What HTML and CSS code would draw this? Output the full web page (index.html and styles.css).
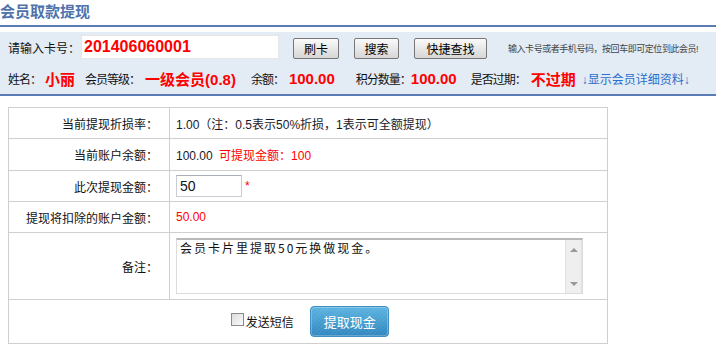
FILE: index.html
```html
<!DOCTYPE html>
<html lang="zh-CN">
<head>
<meta charset="utf-8">
<title>会员取款提现</title>
<link rel="stylesheet" href="styles.css">
</head>
<body>
<div class="title">会员取款提现</div>
<div class="panel">
  <div class="row1">
    <span class="lbl">请输入卡号：</span>
    <input class="card" type="text" value="201406060001">
    <button class="btn b1">刷卡</button>
    <button class="btn b2">搜索</button>
    <button class="btn b3">快捷查找</button>
    <span class="hint">输入卡号或者手机号码，按回车即可定位到此会员!</span>
  </div>
  <div class="row2">
    <span class="lbl">姓名：</span><span class="val v1">小丽</span>
    <span class="lbl l2">会员等级：</span><span class="val v2">一级会员(0.8)</span>
    <span class="lbl l3">余额：</span><span class="val v3">100.00</span>
    <span class="lbl l4">积分数量：</span><span class="val v4">100.00</span>
    <span class="lbl l5">是否过期：</span><span class="val v5">不过期</span>
    <a class="more" href="#">↓显示会员详细资料↓</a>
  </div>
</div>
<div class="wrap">
  <table class="form">
    <tr class="r1">
      <th>当前提现折损率：</th>
      <td>1.00（注：0.5表示50%折损，1表示可全额提现）</td>
    </tr>
    <tr class="r2">
      <th>当前账户余额：</th>
      <td>100.00 <span class="red gap">可提现金额：100</span></td>
    </tr>
    <tr class="r3">
      <th>此次提现金额：</th>
      <td><input class="amt" type="text" value="50"><span class="star">*</span></td>
    </tr>
    <tr class="r4">
      <th>提现将扣除的账户金额：</th>
      <td><span class="red">50.00</span></td>
    </tr>
    <tr class="r5">
      <th>备注：</th>
      <td>
        <div class="memo">
          <textarea class="memo-text">会员卡片里提取50元换做现金。</textarea>
          <div class="sb"><span class="up"></span><span class="down"></span></div>
        </div>
      </td>
    </tr>
    <tr class="r6">
      <td colspan="2" class="actions">
        <label class="chk"><span class="box"></span>发送短信</label>
        <button class="submit">提取现金</button>
      </td>
    </tr>
  </table>
</div>
</body>
</html>
```
FILE: styles.css
```css
* { box-sizing: border-box; }
body {
  margin: 0;
  font-family: "Liberation Sans", "Noto Sans CJK SC", sans-serif;
  font-size: 12px;
  color: #111;
  background: #fff;
}
.title {
  height: 27px;
  line-height: 24px;
  font-size: 15px;
  font-weight: bold;
  color: #4f72ab;
  border-bottom: 2px solid #5b7bb5;
}
.panel {
  margin-top: 5px;
  background: #e3ebf5;
  border-bottom: 2px solid #5b7bb5;
  padding: 3px 8px 5px;
}
.row1 {
  display: flex;
  align-items: center;
  height: 24px;
  white-space: nowrap;
}
.row1 .lbl { width: 73px; }
.card {
  width: 198px;
  height: 24px;
  margin: 0 14px 0 0;
  border: 1px solid #e6e6e6;
  background: #fff;
  padding: 0 2px;
  font-family: "Liberation Sans", sans-serif;
  font-size: 16px;
  font-weight: bold;
  color: #f00;
  outline: none;
}
.btn {
  height: 21px;
  margin-top: 3px;
  padding: 0;
  border: 1px solid #777;
  border-radius: 2px;
  background: linear-gradient(#fafafa, #e8e8e8 50%, #d6d6d6);
  font-family: "Noto Sans CJK SC", sans-serif;
  font-size: 12px;
  color: #000;
  line-height: 19px;
  white-space: nowrap;
}
.b1 { width: 46px; margin-right: 15px; }
.b2 { width: 45px; margin-right: 15px; }
.b3 { width: 73px; margin-right: 21px; }
.hint {
  font-size: 9px;
  color: #444;
  margin-top: 3px;
  letter-spacing: -0.45px;
}
.row2 {
  display: flex;
  align-items: center;
  height: 22px;
  margin-top: 8px;
  white-space: nowrap;
}
.row2 .lbl { color: #111; letter-spacing: -1px; }
.row2 .val {
  font-size: 15px;
  font-weight: bold;
  color: #f00;
}
.v1 { margin-left: 4px; }
.l2 { margin-left: 10px; }
.v2 { margin-left: 5px; }
.l3 { margin-left: 15px; }
.v3 { margin-left: 5px; }
.l4 { margin-left: 21px; }
.v4 { margin-left: 0; }
.l5 { margin-left: 14px; }
.v5 { margin-left: 5px; }
.more {
  margin-left: 6px;
  color: #2a6fcb;
  text-decoration: none;
}
.wrap { padding: 11px 8px 0; }
.form {
  width: 600px;
  border-collapse: collapse;
  border: 1px solid #cfcfcf;
}
.form th, .form td {
  border: 1px solid #cfcfcf;
  padding: 0;
  font-weight: normal;
  vertical-align: middle;
}
.form th {
  width: 161px;
  text-align: right;
  padding-right: 11px;
  color: #111;
}
.form td { padding-left: 6px; color: #1a1a2a; }
.r1 { height: 31px; }
.r2 { height: 32px; }
.r3 { height: 31px; }
.r4 { height: 31px; }
.r5 { height: 67px; }
.r6 { height: 44px; }
.red { color: #f00; }
.gap { margin-left: 3px; }
.amt {
  width: 66px;
  height: 22px;
  border: 1px solid #c9cdd3;
  border-top-color: #aab0b8;
  padding: 0 3px;
  font-family: "Liberation Sans", sans-serif;
  font-size: 14px;
  color: #111;
  vertical-align: middle;
  outline: none;
}
.star {
  color: #f00;
  margin-left: 3px;
  vertical-align: middle;
}
.memo {
  display: flex;
  width: 407px;
  height: 56px;
  border: 1px solid #dcdcdc;
  border-top: 2px solid #b8b8b8;
}
.memo-text {
  flex: 1;
  border: 0;
  resize: none;
  padding: 1px 3px 0;
  font-family: "Noto Sans CJK SC", sans-serif;
  font-size: 12px;
  letter-spacing: 2px;
  color: #111;
  outline: none;
  line-height: 14px;
  overflow: hidden;
}
.sb {
  width: 17px;
  background: #efefef;
  border-left: 1px solid #e2e2e2;
  border-right: 1px solid #dde2ea;
  display: flex;
  flex-direction: column;
  justify-content: space-between;
  align-items: center;
  padding: 8px 0 7px;
}
.up, .down {
  width: 0;
  height: 0;
  border-left: 4px solid transparent;
  border-right: 4px solid transparent;
}
.up { border-bottom: 4px solid #999; }
.down { border-top: 4px solid #999; }
.actions {
  text-align: center;
  padding-left: 4px !important;
}
.chk {
  display: inline-flex;
  align-items: center;
  vertical-align: middle;
  margin-right: 13px;
  font-family: "Noto Sans CJK SC", sans-serif;
  font-size: 12px;
  color: #111;
}
.box {
  width: 13px;
  height: 13px;
  border: 1px solid #8a8a8a;
  background: linear-gradient(135deg, #dcdcdc, #fafafa);
  margin-right: 2px;
  margin-top: -4px;
}
.submit {
  vertical-align: middle;
  width: 79px;
  height: 31px;
  border: 1px solid #3d8fc4;
  border-radius: 4px;
  background: repeating-linear-gradient(135deg, rgba(255,255,255,0.06) 0 1px, rgba(0,0,0,0) 1px 3px),
              linear-gradient(#5db4e0, #2f87bf);
  color: #fff;
  font-family: "Noto Sans CJK SC", sans-serif;
  font-size: 13px;
  box-shadow: inset 0 0 0 1px rgba(255,255,255,0.25);
}
```
